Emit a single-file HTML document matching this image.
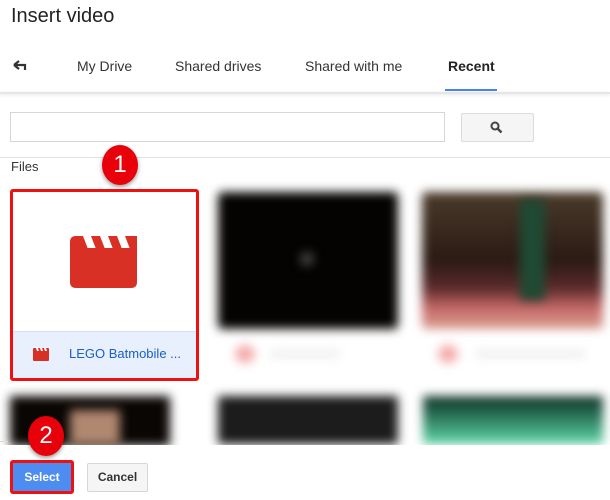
<!DOCTYPE html>
<html><head><meta charset="utf-8"><style>
*{margin:0;padding:0;box-sizing:border-box}
body{width:610px;height:500px;overflow:hidden;background:#fff;font-family:"Liberation Sans",Arial,sans-serif;position:relative;color:#222}
.a{position:absolute}
.tab{position:absolute;top:58px;font-size:14px;color:#333}
.blur{filter:blur(5px)}
.circ{position:absolute;width:36px;height:40px;border-radius:50%;background:#e8000b;color:#fff;font-size:24px;text-align:center;line-height:40px;box-shadow:0 2px 4px rgba(0,0,0,.4)}
</style></head><body>
<div class="a" style="left:11px;top:5px;font-size:20px;color:#222">Insert video</div>
<svg class="a" style="left:13px;top:60px" width="14" height="12" viewBox="0 0 14 12"><path d="M1 5 L6 1 M1 5 L6 9 M1 5 H12 V10" stroke="#333" stroke-width="2.2" fill="none"/></svg>
<div class="tab" style="left:77px">My Drive</div>
<div class="tab" style="left:175px">Shared drives</div>
<div class="tab" style="left:305px">Shared with me</div>
<div class="tab" style="left:448px;font-weight:bold;color:#222">Recent</div>
<div class="a" style="left:445px;top:89px;width:52px;height:2px;background:#4285f4"></div>
<div class="a" style="left:0;top:92px;width:610px;height:2px;background:#e6e6e6;box-shadow:0 1px 3px rgba(0,0,0,.12)"></div>
<div class="a" style="left:10px;top:112px;width:435px;height:30px;border:1px solid #d6d6d6"></div>
<div class="a" style="left:461px;top:113px;width:73px;height:29px;border:1px solid #dcdcdc;background:#f5f5f5;border-radius:2px"></div>
<svg class="a" style="left:490px;top:121px" width="13" height="13" viewBox="0 0 13 13"><circle cx="5" cy="5" r="3.5" stroke="#444" stroke-width="2" fill="none"/><path d="M7.5 7.5 L11.5 11.5" stroke="#444" stroke-width="2.5"/></svg>
<div class="a" style="left:0;top:157px;width:610px;height:1px;background:#e2e2e2"></div>
<div class="a" style="left:11px;top:159px;font-size:13px;color:#333">Files</div>

<div class="a" style="left:10px;top:189px;width:189px;height:192px;border:3px solid #ef1010;border-radius:3px;background:#fff;overflow:hidden">
 <div class="a" style="left:0;top:139px;width:183px;height:47px;background:#e8f0fe;border-top:1px solid #d4e0f5"></div>
</div>
<svg class="a" style="left:70px;top:235px" width="67" height="54" viewBox="0 0 67 54"><path d="M0 7 Q0 1 6 1 H67 V47 Q67 53 61 53 H6 Q0 53 0 47 Z" fill="#d93025"/><path d="M13 1 H21 L26 14 H18 Z M30 1 H38 L43 14 H35 Z M47 1 H55 L60 14 H52 Z" fill="#fff"/><rect x="0" y="13" width="67" height="2" fill="#d93025"/></svg>
<svg class="a" style="left:33px;top:347px" width="16" height="14" viewBox="0 0 16 14"><rect x="0" y="1" width="16" height="13" rx="1" fill="#d93025"/><path d="M3 1h2l1 3H4zM7 1h2l1 3H8zM11 1h2l1 3h-2z" fill="#fff"/></svg>
<div class="a" style="left:69px;top:346px;font-size:13px;color:#1a5fc8">LEGO Batmobile ...</div>

<div class="a blur" style="left:218px;top:192px;width:180px;height:137px;background:#050301;border-radius:4px"></div>
<div class="a blur" style="left:300px;top:252px;width:14px;height:14px;background:#444;border-radius:50%"></div>
<div class="a blur" style="left:422px;top:192px;width:181px;height:137px;background:linear-gradient(180deg,#4a3a2a 0%,#2a1a14 50%,#5a2a2a 70%,#c86a6a 85%,#d8a090 100%);border-radius:4px"></div>
<div class="a blur" style="left:520px;top:200px;width:25px;height:100px;background:#1f4a33"></div>
<div class="a blur" style="left:235px;top:345px;width:20px;height:18px;background:#f4aaaa;border-radius:50%"></div>
<div class="a blur" style="left:270px;top:350px;width:70px;height:8px;background:#eee"></div>
<div class="a blur" style="left:438px;top:345px;width:20px;height:18px;background:#f4aaaa;border-radius:50%"></div>
<div class="a blur" style="left:475px;top:350px;width:110px;height:8px;background:#eee"></div>
<div class="a blur" style="left:10px;top:396px;width:160px;height:50px;background:#0a0604"></div>
<div class="a blur" style="left:70px;top:410px;width:50px;height:35px;background:#b08870"></div>
<div class="a blur" style="left:218px;top:396px;width:180px;height:48px;background:#1c1c1c"></div>
<div class="a blur" style="left:423px;top:396px;width:180px;height:48px;background:linear-gradient(180deg,#103024 0%,#20604a 30%,#60d8a8 100%)"></div>

<div class="a" style="left:0;top:445px;width:610px;height:55px;background:#fff"></div>
<div class="a" style="left:0;top:441px;width:8px;height:1px;background:#ddd"></div>
<div class="a" style="left:10px;top:460px;width:64px;height:34px;border:3px solid #ef1010;border-radius:3px;background:#4d8cf0;color:#fff;font-weight:bold;font-size:12px;text-align:center;line-height:28px">Select</div>
<div class="a" style="left:87px;top:463px;width:61px;height:29px;border:1px solid #d6d6d6;background:#f5f5f5;border-radius:2px;font-size:12px;font-weight:bold;color:#333;text-align:center;line-height:27px">Cancel</div>

<div class="circ" style="left:102px;top:145px">1</div>
<div class="circ" style="left:28px;top:416px">2</div>
</body></html>
